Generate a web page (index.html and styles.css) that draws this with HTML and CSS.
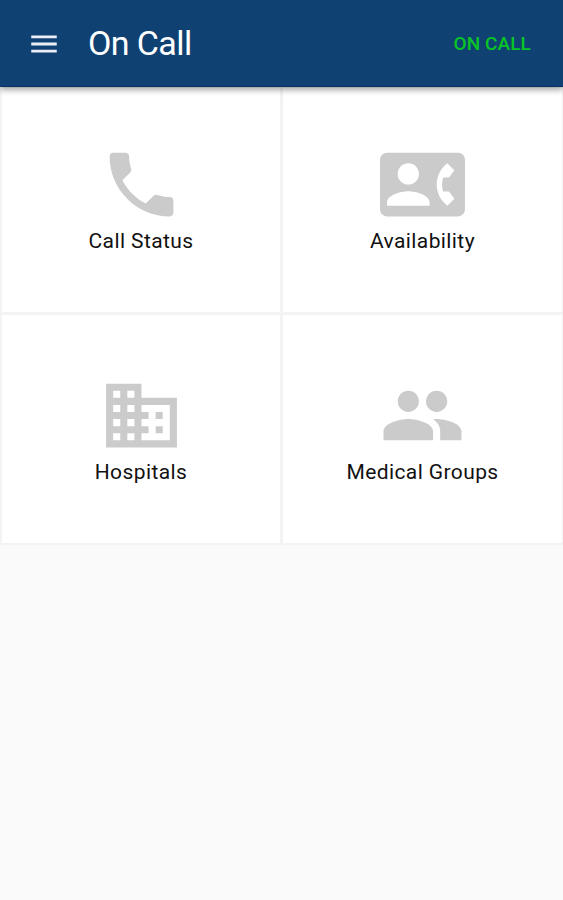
FILE: index.html
```html
<!DOCTYPE html>
<html lang="en">
<head>
<meta charset="utf-8">
<title>On Call</title>
<link rel="stylesheet" href="styles.css">
</head>
<body>
<header class="bar">
  <svg class="menu" viewBox="0 0 24 24"><path d="M3 18h18v-2H3v2zm0-5h18v-2H3v2zm0-7v2h18V6H3z"/></svg>
  <h1 class="title">On Call</h1>
  <span class="status">ON CALL</span>
</header>
<main class="grid">
  <section class="tile">
    <svg class="icon" viewBox="0 0 24 24"><path d="M6.620 10.790c1.440 2.830 3.760 5.140 6.590 6.590l2.200-2.200c.27-.27.67-.36 1.020-.24 1.120.37 2.330.57 3.570.57.55 0 1 .45 1 1V20c0 .55-.45 1-1 1-9.390 0-17-7.610-17-17 0-.55.45-1 1-1h3.500c.55 0 1 .45 1 1 0 1.250.2 2.450.57 3.570.11.35.03.74-.25 1.020l-2.200 2.200z"/></svg>
    <span class="label">Call Status</span>
  </section>
  <section class="tile">
    <svg class="icon" viewBox="0 0 24 24"><path d="M22 3H2C.9 3 0 3.900 0 5v14c0 1.100.9 2 2 2h20c1.100 0 1.990-.9 1.990-2L24 5c0-1.100-.9-2-2-2zM8 6c1.660 0 3 1.340 3 3s-1.340 3-3 3-3-1.340-3-3 1.340-3 3-3zm6 12H2v-1c0-2 4-3.100 6-3.100s6 1.100 6 3.100v1zm3.850-4h1.640L21 16l-1.990 1.990c-1.310-.98-2.280-2.380-2.730-3.990-.18-.64-.28-1.310-.28-2s.1-1.360.28-2c.45-1.620 1.420-3.010 2.730-3.990L21 8l-1.510 2h-1.640c-.22.63-.35 1.300-.35 2s.13 1.370.35 2z"/></svg>
    <span class="label">Availability</span>
  </section>
  <section class="tile">
    <svg class="icon" viewBox="0 0 24 24"><path d="M12 7V3H2v18h20V7H12zM6 19H4v-2h2v2zm0-4H4v-2h2v2zm0-4H4V9h2v2zm0-4H4V5h2v2zm4 12H8v-2h2v2zm0-4H8v-2h2v2zm0-4H8V9h2v2zm0-4H8V5h2v2zm10 12h-8v-2h2v-2h-2v-2h2v-2h-2V9h8v10zm-2-8h-2v2h2v-2zm0 4h-2v2h2v-2z"/></svg>
    <span class="label">Hospitals</span>
  </section>
  <section class="tile">
    <svg class="icon" viewBox="0 0 24 24"><path d="M16 11c1.660 0 2.990-1.340 2.990-3S17.660 5 16 5c-1.660 0-3 1.340-3 3s1.340 3 3 3zm-8 0c1.660 0 2.990-1.340 2.990-3S9.660 5 8 5C6.340 5 5 6.340 5 8s1.340 3 3 3zm0 2c-2.330 0-7 1.170-7 3.500V19h14v-2.500c0-2.330-4.670-3.500-7-3.500zm8 0c-.29 0-.62.02-.97.05 1.160.84 1.970 1.970 1.970 3.450V19h6v-2.500c0-2.330-4.670-3.500-7-3.500z"/></svg>
    <span class="label">Medical Groups</span>
  </section>
</main>
</body>
</html>
```
FILE: styles.css
```css
* { box-sizing: border-box; }
body {
  margin: 0;
  min-height: 100vh;
  background: #fafafa;
  font-family: Roboto, "Liberation Sans", sans-serif;
}
.bar {
  position: relative;
  display: flex;
  align-items: center;
  height: 87px;
  padding: 0 32px 0 27px;
  background: #104173;
  border-bottom: 1px solid #0b3265;
  box-shadow: 0 3px 6px rgba(0, 0, 0, .35);
}
.menu { width: 34px; height: 34px; margin-top: 1px; fill: #eceef5; }
.title {
  flex: 1;
  margin: 0 0 0 27px;
  color: #fff;
  font-size: 34px;
  font-weight: 400;
  line-height: 40px;
  letter-spacing: -.6px;
}
.status {
  padding-top: 2px;
  color: #08c525;
  font-size: 19px;
  font-weight: 500;
  line-height: 24px;
  letter-spacing: .1px;
}
.grid {
  display: grid;
  grid-template-columns: 278px 279px;
  grid-template-rows: 224px 228px;
  gap: 3px;
  padding: 1px 1px 2px 2px;
  background: #f3f3f3;
}
.tile {
  display: flex;
  flex-direction: column;
  align-items: center;
  padding-top: 54px;
  background: #fff;
}
.tile:nth-child(n + 3) { padding-top: 58px; }
.icon { width: 85px; height: 85px; fill: #cbcbcb; }
.label {
  margin-top: 1px;
  color: #111;
  font-size: 21px;
  line-height: 26px;
  letter-spacing: .4px;
  white-space: nowrap;
}
```
